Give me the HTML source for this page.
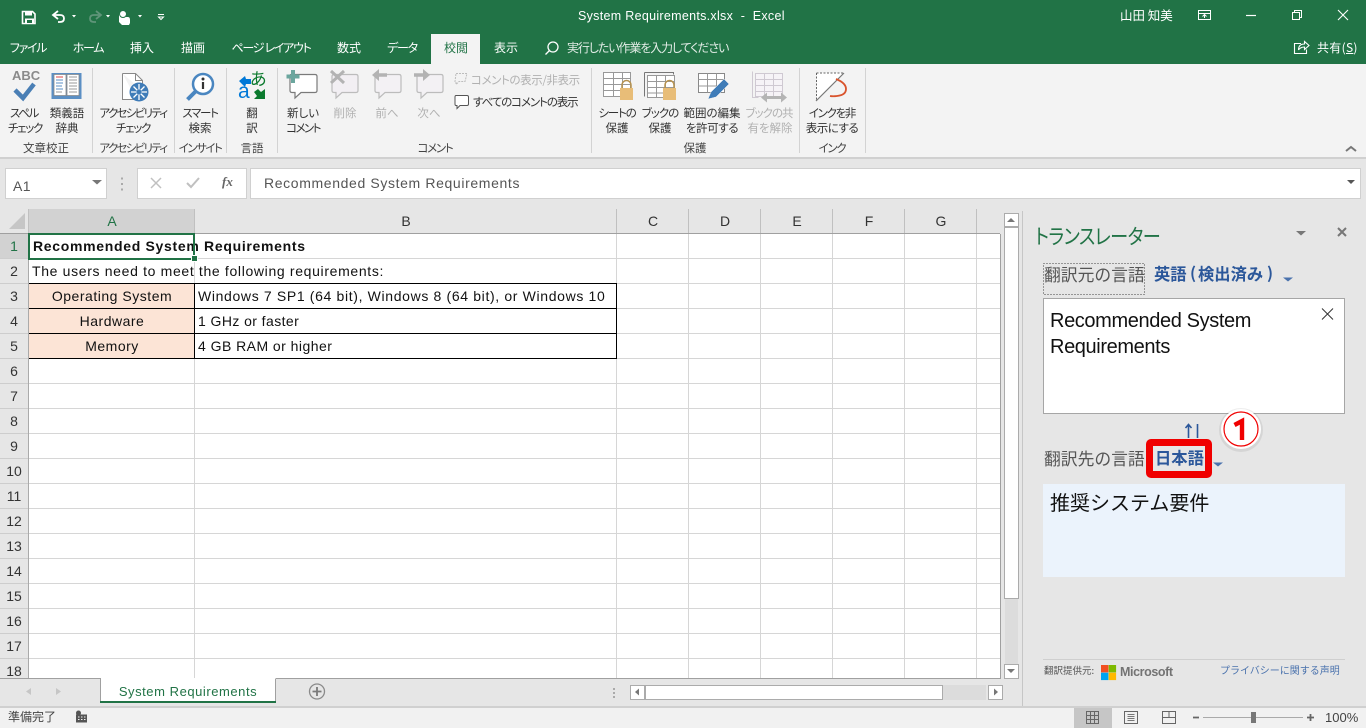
<!DOCTYPE html>
<html lang="ja"><head><meta charset="utf-8"><title>System Requirements.xlsx - Excel</title>
<style>
*{box-sizing:border-box}
html,body{margin:0;padding:0;width:1366px;height:728px;overflow:hidden;background:#e6e6e6}
body{position:relative;font-family:"Liberation Sans","Noto Sans CJK JP",sans-serif;color:#262626}
.r{position:absolute}
.t{position:absolute;white-space:nowrap;line-height:1;font-family:"Noto Sans CJK JP","Liberation Sans",sans-serif;font-feature-settings:"palt"}
.c{transform:translateX(-50%);text-align:center}
.w{color:#fff}
.tab{font-size:12px;top:42px;color:#fff}
.l{font-size:11.5px;color:#333}
.g{font-size:11.5px;color:#444;top:143px}
.d{color:#b1b1b1}
.k{letter-spacing:-1.3px}
.cell{position:absolute;white-space:nowrap;line-height:1;font-family:"Liberation Sans","Noto Sans CJK JP",sans-serif;font-size:14px;color:#111;letter-spacing:.5px}
.rh{position:absolute;left:0;width:28px;text-align:center;font:14px/1 "Liberation Sans",sans-serif;color:#333}
.ch{position:absolute;top:214px;font:14px/1 "Liberation Sans",sans-serif;color:#333;transform:translateX(-50%)}
svg{position:absolute;left:0;top:0}
</style></head><body>
<div class="r" style="left:0;top:0;width:1366px;height:64px;background:#217346"></div>
<div class="r" style="left:431px;top:34px;width:49px;height:30px;background:#f3f3f3"></div>
<div class="r" style="left:0;top:64px;width:1366px;height:93px;background:#f3f3f3"></div>
<div class="r" style="left:0;top:157px;width:1366px;height:2px;background:#d0d0d0"></div>
<div class="r" style="left:5px;top:168px;width:102px;height:31px;background:#fff;border:1px solid #d0d0d0"></div>
<div class="r" style="left:137px;top:168px;width:110px;height:31px;background:#fff;border:1px solid #d0d0d0"></div>
<div class="r" style="left:250px;top:168px;width:1111px;height:31px;background:#fff;border:1px solid #d0d0d0"></div>
<div class="r" style="left:29px;top:234px;width:971px;height:444px;background:#fff"></div>
<div class="r" style="left:29px;top:284px;width:166px;height:74px;background:#fce4d6"></div>
<div class="r" style="left:29px;top:209px;width:166px;height:24px;background:#d2d2d2"></div>
<div class="r" style="left:0;top:234px;width:28px;height:25px;background:#d2d2d2"></div>
<div class="r" style="left:100px;top:678px;width:176px;height:25px;background:#fff"></div>
<div class="r" style="left:0;top:706px;width:1366px;height:22px;background:#f1f1f1;border-top:2px solid #d0d0d0"></div>
<div class="r" style="left:1074px;top:708px;width:38px;height:20px;background:#c6c6c6"></div>
<div class="r" style="left:1043px;top:298px;width:302px;height:116px;background:#fff;border:1px solid #a6a6a6"></div>
<div class="r" style="left:1043px;top:484px;width:302px;height:93px;background:#ebf3fc"></div>
<div class="r" style="left:1146px;top:439px;width:66px;height:39px;border:7px solid #f00000;border-radius:5px"></div>

<svg width="1366" height="728" viewBox="0 0 1366 728" fill="none">
<!-- Quick access -->
<g stroke="#fff" stroke-width="1.6"><path d="M22.500 11.500h10l2.500 2.500v9.500h-12.500z"/></g>
<path d="M25 11.500h7v4h-7zM25 18.500h9v5h-9z" fill="#fff"/><path d="M27 20h5v3h-5z" fill="#217346"/>
<path d="M58 11l-5 4 5 4" stroke="#fff" stroke-width="1.800"/><path d="M54 15h6q4 0 4 3.500t-4 3.500h-2" stroke="#fff" stroke-width="1.800"/>
<path d="M72 15h4l-2 2.500zM106 15h4l-2 2.500zM138 15h4l-2 2.500z" fill="#fff"/>
<path d="M96 11l5 4-5 4" stroke="#5f9579" stroke-width="1.800"/><path d="M100 15h-6q-4 0-4 3.500t4 3.500h2" stroke="#5f9579" stroke-width="1.800"/>
<path d="M119 22v-7q0-2 1.500-3t3.500 0 2 3v2h2q2 0 2 3v3l-1 2h-7z" fill="#fff"/><circle cx="123" cy="14" r="3.500" stroke="#217346" fill="#fff"/>
<path d="M158 14.500h6M158.500 17h5l-2.500 2.500z" stroke="#fff"/>
<!-- window -->
<g stroke="#fff" stroke-width="1"><rect x="1198.500" y="10.500" width="12" height="9"/><path d="M1198 13.500h13M1204.500 18v-3.500M1202.500 16.500l2-2 2 2"/><path d="M1246 15.500h10" stroke-width="1.200"/><rect x="1292.500" y="12.500" width="7" height="7"/><path d="M1294.500 12.500v-2h7v7h-2"/><path d="M1338 10l10 10M1348 10l-10 10" stroke-width="1.100"/></g>
<circle cx="553" cy="47" r="5" stroke="#fff" stroke-width="1.300"/><path d="M549.500 50.500l-4 4" stroke="#fff" stroke-width="1.300"/>
<g stroke="#fff" stroke-width="1.100"><path d="M1301 43.500h-6.500v10h12v-4M1298.500 50q0-6 6-6v-2.500l4.500 4-4.500 4v-2.500q-4 0-6 3"/></g>
<!-- ribbon seps -->
<path d="M92.500 68v85M174.500 68v85M226.500 68v85M277.500 68v85M591.500 68v85M799.500 68v85M865.500 68v85" stroke="#d3d3d3"/>
<path d="M1346 151l5-4 5 4" stroke="#777" stroke-width="2"/>
<!-- spell -->
<path d="M15 90l8 8 11-14" stroke="#4a7fb5" stroke-width="4.500"/>
<!-- book -->
<rect x="51.500" y="73" width="30" height="26" fill="#5b8fc4"/><path d="M54 74.500h12v21h-12zM67 74.500h12v21h-12z" fill="#fff" stroke="#8a8a8a" stroke-width=".8"/>
<path d="M56 77h7" stroke="#d44"/><path d="M56 80h7M56 83h7M56 86h6M56 89h7" stroke="#5b8fc4"/><path d="M69 77h8M69 80h8M69 83h8M69 86h8M69 89h8M69 92h8" stroke="#999"/><path d="M56 92h6" stroke="#999"/>
<!-- accessibility -->
<path d="M122.500 73.500h13l7 7v10M122.500 73.500v26h14" stroke="#888" fill="#fff"/><path d="M135.500 73.500v7h7" stroke="#888"/>
<circle cx="139" cy="92" r="9.500" fill="#3f7cb8"/><path d="M139 84v16M131 92h16M133.500 86.500l11 11M144.500 86.500l-11 11" stroke="#fff" stroke-width="1.300"/><circle cx="139" cy="92" r="2.500" fill="#3f7cb8"/>
<!-- smart -->
<circle cx="203" cy="84" r="10" fill="#fff" stroke="#4a86c0" stroke-width="2.500"/><path d="M195.500 91.500l-8 8" stroke="#4a86c0" stroke-width="4"/><circle cx="203" cy="79" r="1.500" fill="#333"/><path d="M203 82v7" stroke="#333" stroke-width="2.200"/>
<!-- translate -->
<path d="M239 81l6-5 1 3h5v5h-5l-1 3z" fill="#0078d7"/>
<path d="M265 99h-11l3-3-3-4 4-3 3 3 4-3z" fill="#0c7a2e"/>
<!-- comments -->
<path d="M291 74.500h24q2 0 2 2v14q0 2-2 2h-14l-6 5.500v-5.500h-3q-2 0-2-2v-14q0-2 1-2z" stroke="#7a7a7a" stroke-width="1.200" fill="#fff"/>
<path d="M293 70v13M286.500 76.500h13" stroke="#6ba69e" stroke-width="4"/>
<path d="M334 74.500h22q2 0 2 2v14q0 2-2 2h-14l-6 5.500v-5.500h-2q-2 0-2-2v-14q0-2 2-2z" stroke="#bcbcbc" stroke-width="1.200" fill="#f2eff3"/>
<path d="M331 71l13 12M344 71l-13 12" stroke="#b3b3b3" stroke-width="3"/>
<path d="M375 74.500h24q2 0 2 2v14q0 2-2 2h-14l-6 5.500v-5.500h-2q-2 0-2-2v-14q0-2 2-2z" stroke="#bcbcbc" stroke-width="1.200" fill="#f3f1f4"/>
<path d="M376 75h11" stroke="#b3b3b3" stroke-width="3.500"/><path d="M379 69l-7 6 7 6z" fill="#b3b3b3"/>
<path d="M417 74.500h24q2 0 2 2v14q0 2-2 2h-14l-6 5.500v-5.500h-2q-2 0-2-2v-14q0-2 2-2z" stroke="#bcbcbc" stroke-width="1.200" fill="#f3f1f4"/>
<path d="M414 75h11" stroke="#b3b3b3" stroke-width="3.500"/><path d="M423 69l7 6-7 6z" fill="#b3b3b3"/>
<path d="M456 73.500h11l-2 8h-6l-3 3v-3h-1z" stroke="#bdbdbd" stroke-dasharray="2 1"/>
<path d="M456 95.500h11q1.500 0 1.500 1.500v7q0 1.500-1.500 1.500h-7l-3 3v-3h-1q-1 0-1-1.500v-7q0-1.500 1-1.500z" stroke="#555" fill="#fff"/>
<!-- protect -->
<path d="M603.500 72.500h27v24h-27z" stroke="#999" fill="#fff"/><path d="M603.500 78.500h27M603.500 84.500h27M603.500 90.500h27M613.500 72.500v24M622.500 72.500v24" stroke="#999"/>
<rect x="620" y="88" width="13" height="12" fill="#e8bd78"/><path d="M622 88v-3a4.500 4.500 0 0 1 9 0v3" stroke="#b6924f" stroke-width="1.500"/>
<path d="M644.500 72.500h29v2M644.500 72.500v24" stroke="#777"/><path d="M647.500 75.500h27v22h-27z" stroke="#999" fill="#fff"/><path d="M647.500 81.500h27M647.500 87.500h27M647.500 93h27M656.500 75.500v22M665.500 75.500v22" stroke="#999"/>
<rect x="663" y="88" width="13" height="12" fill="#e8bd78"/><path d="M665 88v-3a4.500 4.500 0 0 1 9 0v3" stroke="#b6924f" stroke-width="1.500"/>
<path d="M698.500 73.500h26v19h-26z" stroke="#888" fill="#fff"/><path d="M698.500 79.500h26M698.500 86h26M707.500 73.500v19M716.500 73.500v19" stroke="#999"/>
<path d="M708 99l3-7 13-13 5 5-13 13z" fill="#3f7cb8" stroke="#f3f3f3" stroke-width=".5"/>
<path d="M755.500 73.500h27v23h-27z" stroke="#cfc9d2" fill="#f6f3f7"/><path d="M755.500 79.500h27M755.500 85.500h27M755.500 91.500h27M764.500 73.500v23M773.500 73.500v23M752.500 71.500v26h6" stroke="#cfc9d2"/>
<path d="M764 97.500h20" stroke="#b4b4b4" stroke-width="3"/><path d="M767 92.500l-6 5 6 5zM781 92.500l6 5-6 5z" fill="#b4b4b4"/>
<!-- ink -->
<path d="M816.500 73h27.500l-27 27.500z" fill="#fff"/><path d="M816.500 73h27M816.500 73v27" stroke="#666" stroke-dasharray="2 1.500"/><path d="M844 73l-28 28" stroke="#777" stroke-width="1.200"/>
<path d="M836 79q10 4 10 10t-9 7q-4 .5-7 0" stroke="#d9532c" stroke-width="1.800"/>
<!-- name box -->
<path d="M92 180h10l-5 4.500z" fill="#777"/><path d="M122 177.500v2M122 183v2M122 188.500v2" stroke="#aaa" stroke-width="2"/>
<path d="M151 178l10 10M161 178l-10 10" stroke="#c0c0c0" stroke-width="1.500"/><path d="M187 183l4 4 8-9" stroke="#c0c0c0" stroke-width="2"/>
<path d="M1347 180h8l-4 4z" fill="#555"/>
<!-- corner -->
<path d="M25 213v16h-16z" fill="#c6c6c6"/>
<!-- headers -->
<path d="M28.500 209v25M194.500 209v25M616.500 209v25M688.500 209v25M760.500 209v25M832.500 209v25M904.500 209v25M976.500 209v25" stroke="#c0c0c0"/>
<path d="M0 233.500h1000" stroke="#a0a0a0"/>
<path d="M28.500 233v445" stroke="#aaa"/>
<path d="M0 258.500h28M0 283.500h28M0 308.500h28M0 333.500h28M0 358.500h28M0 383.500h28M0 408.500h28M0 433.500h28M0 458.500h28M0 483.500h28M0 508.500h28M0 533.500h28M0 558.500h28M0 583.500h28M0 608.500h28M0 633.500h28M0 658.500h28" stroke="#cdcdcd"/>
<!-- grid -->
<path d="M29 258.500h971M29 283.500h971M29 308.500h971M29 333.500h971M29 358.500h971M29 383.500h971M29 408.500h971M29 433.500h971M29 458.500h971M29 483.500h971M29 508.500h971M29 533.500h971M29 558.500h971M29 583.500h971M29 608.500h971M29 633.500h971M29 658.500h971" stroke="#d6d6d6"/>
<path d="M194.500 259v419M616.500 234v444M688.500 234v444M760.500 234v444M832.500 234v444M904.500 234v444M976.500 234v444" stroke="#d6d6d6"/>
<path d="M1000.500 234v445" stroke="#a0a0a0"/>
<path d="M29 283.500h588M29 308.500h588M29 333.500h588M29 358.500h588M194.500 283v76M616.500 283v76" stroke="#000"/>
<!-- vscroll -->
<rect x="1004.500" y="213.500" width="14" height="13" fill="#fff" stroke="#ababab"/><path d="M1007 222h8l-4-4z" fill="#777"/>
<rect x="1004.500" y="227.500" width="14" height="371" fill="#fff" stroke="#ababab"/>
<rect x="1005" y="599" width="13" height="65" fill="#dcdcdc"/>
<rect x="1004.500" y="664.500" width="14" height="14" fill="#fff" stroke="#ababab"/><path d="M1007 669h8l-4 4z" fill="#777"/>
<path d="M1022.500 211v495" stroke="#c6c6c6"/>
<!-- tabs -->
<path d="M0 678.500h100.500v24M275.500 678.500v24M276 678.500h724" stroke="#a0a0a0"/>
<path d="M100 702h176" stroke="#217346" stroke-width="2"/>
<path d="M31 688l-5 3.500 5 3.500zM56 688l5 3.500-5 3.500z" fill="#c6c6c6"/>
<circle cx="317" cy="691.500" r="7.500" stroke="#8a8a8a" stroke-width="1.300"/><path d="M317 687v9M312.500 691.500h9" stroke="#7a7a7a" stroke-width="1.800"/>
<path d="M614 688v2M614 692v2M614 696v2" stroke="#aaa" stroke-width="2"/>
<rect x="630.500" y="685.500" width="14" height="14" fill="#fff" stroke="#ababab"/><path d="M639 688.500v7l-4-3.500z" fill="#777"/>
<rect x="645.500" y="685.500" width="297" height="14" fill="#fff" stroke="#ababab"/>
<rect x="943" y="685" width="43" height="15" fill="#dcdcdc"/>
<rect x="988.500" y="685.500" width="14" height="14" fill="#fff" stroke="#ababab"/><path d="M994 688.500v7l4-3.500z" fill="#777"/>
<!-- status -->
<circle cx="78.500" cy="713" r="2.500" fill="#555"/><path d="M76 714.500h11v8h-11z" fill="#555"/><path d="M78 717h1.500M81 717h1.500M84 717h1.500M78 719.500h1.500M81 719.500h1.500M84 719.500h1.500" stroke="#f1f1f1"/>
<path d="M1086.500 711.500h12v12h-12zM1086.500 715.500h12M1086.500 719.500h12M1090.500 711.500v12M1094.500 711.500v12" stroke="#666"/>
<path d="M1124.500 711.500h13v12h-13z" stroke="#666"/><path d="M1127.500 714.500h7M1127.500 716.500h7M1127.500 718.500h7M1127.500 720.500h7" stroke="#777"/>
<path d="M1162.500 711.500h13v12h-13zM1169 711.500v6M1162.500 717.500h13" stroke="#666"/>
<path d="M1193 717.500h6M1307 717.500h7M1310.500 714v7" stroke="#666" stroke-width="1.800"/><path d="M1203 717.500h100" stroke="#aaa"/><rect x="1251" y="712" width="5" height="11" fill="#777"/>
<!-- panel -->
<path d="M1296 231h10l-5 4.500z" fill="#777"/>
<path d="M1338 228l8 8M1346 228l-8 8" stroke="#777" stroke-width="2"/>
<rect x="1043.500" y="263.500" width="101" height="31" stroke="#444" stroke-dasharray="1 2"/>
<path d="M1283 277.500h10l-5 4z" fill="#4a72ad"/>
<path d="M1322 308.500l11 11M1333 308.500l-11 11" stroke="#333"/>
<path d="M1188.500 438v-13M1185.500 428l3-3.500 3 3.500" stroke="#2b579a" stroke-width="1.600"/><path d="M1197.500 424v14" stroke="#2b579a" stroke-width="1.600"/>
<path d="M1213 462.500h10l-5 4z" fill="#4a72ad"/>
<path d="M1043 659.500h302" stroke="#cfcfcf"/>
<rect x="1101" y="665" width="7.400" height="7.400" fill="#f25022"/><rect x="1108.700" y="665" width="7.400" height="7.400" fill="#7fba00"/><rect x="1101" y="672.700" width="7.400" height="7.400" fill="#00a4ef"/><rect x="1108.700" y="672.700" width="7.400" height="7.400" fill="#ffb900"/>
<!-- annotation -->
<circle cx="1241" cy="430" r="22" fill="#000" opacity=".07"/>
<circle cx="1241" cy="429" r="20" fill="#fff"/>
<circle cx="1241" cy="429" r="17" stroke="#f00000" stroke-width="1.200"/>
<path d="M1234.500 425l7.500-4v19" stroke="#f00000" stroke-width="4.400"/>
</svg>

<!-- title -->
<div class="t w" style="left:578px;top:10px;font:12.500px/1 'Liberation Sans',sans-serif;letter-spacing:.3px">System Requirements.xlsx&nbsp; -&nbsp; Excel</div>
<div class="t w" style="left:1120px;top:9px;font-size:12.500px">山田 知美</div>
<div class="t tab c k" style="left:28px">ファイル</div>
<div class="t tab c k" style="left:88px">ホーム</div>
<div class="t tab c" style="left:142px">挿入</div>
<div class="t tab c" style="left:193px">描画</div>
<div class="t tab c k" style="left:271px">ページ レイアウト</div>
<div class="t tab c" style="left:349px">数式</div>
<div class="t tab c k" style="left:402px">データ</div>
<div class="t tab c" style="left:456px;color:#217346">校閲</div>
<div class="t tab c" style="left:506px">表示</div>
<div class="t tab" style="left:567px;color:#e2ece6;letter-spacing:-1.1px">実行したい作業を入力してください</div>
<div class="t tab" style="left:1317px;letter-spacing:.3px">共有(<u>S</u>)</div>

<!-- ribbon labels -->
<div class="t" style="left:12px;top:69px;font:bold 13px/1 'Liberation Sans',sans-serif;color:#8a8a8a">ABC</div>
<div class="t l c k" style="left:24px;top:108px">スペル</div><div class="t l c k" style="left:25px;top:123px">チェック</div>
<div class="t l c" style="left:67px;top:108px">類義語</div><div class="t l c" style="left:67px;top:123px">辞典</div>
<div class="t l c k" style="left:133px;top:108px;letter-spacing:-1.7px">アクセシビリティ</div><div class="t l c k" style="left:133px;top:123px">チェック</div>
<div class="t l c k" style="left:200px;top:108px">スマート</div><div class="t l c" style="left:200px;top:123px">検索</div>
<div class="t l c" style="left:252px;top:108px">翻</div><div class="t l c" style="left:252px;top:123px">訳</div>
<div class="t" style="left:250px;top:69px;font-size:17px;color:#0c7a2e">あ</div>
<div class="t" style="left:238px;top:81px;font:21px/1 'Liberation Sans',sans-serif;color:#0078d7">a</div>
<div class="t l c" style="left:303px;top:108px">新しい</div><div class="t l c k" style="left:303px;top:123px;letter-spacing:-1.6px">コメント</div>
<div class="t l c d" style="left:345px;top:108px">削除</div>
<div class="t l c d" style="left:387px;top:108px">前へ</div>
<div class="t l c d" style="left:429px;top:108px">次へ</div>
<div class="t l d" style="left:471px;top:75px;letter-spacing:-.4px">コメントの表示/非表示</div>
<div class="t l" style="left:473px;top:97px;letter-spacing:-1.1px">すべてのコメントの表示</div>
<div class="t l c" style="left:617px;top:108px;letter-spacing:-1.2px">シートの</div><div class="t l c" style="left:617px;top:123px">保護</div>
<div class="t l c" style="left:660px;top:108px;letter-spacing:-1px">ブックの</div><div class="t l c" style="left:660px;top:123px">保護</div>
<div class="t l c" style="left:712px;top:108px">範囲の編集</div><div class="t l c" style="left:712px;top:123px;letter-spacing:-.4px">を許可する</div>
<div class="t l c d" style="left:769px;top:108px;letter-spacing:-1px">ブックの共</div><div class="t l c d" style="left:770px;top:123px">有を解除</div>
<div class="t l c" style="left:832px;top:108px;letter-spacing:-1.3px">インクを非</div><div class="t l c" style="left:832px;top:123px;letter-spacing:-.5px">表示にする</div>
<div class="t g c" style="left:46px">文章校正</div>
<div class="t g c k" style="left:133px;letter-spacing:-1.7px">アクセシビリティ</div>
<div class="t g c k" style="left:200px;letter-spacing:-1.5px">インサイト</div>
<div class="t g c" style="left:252px">言語</div>
<div class="t g c k" style="left:435px">コメント</div>
<div class="t g c" style="left:695px">保護</div>
<div class="t g c k" style="left:832px">インク</div>

<!-- formula bar -->
<div class="t" style="left:13px;top:179px;font:14px/1 'Liberation Sans',sans-serif;color:#555;letter-spacing:.4px">A1</div>
<div class="t" style="left:222px;top:175px;font:italic bold 13px/1 'Liberation Serif',serif;color:#666">fx</div>
<div class="t" style="left:264px;top:176px;font:14px/1 'Liberation Sans',sans-serif;color:#555;letter-spacing:.63px">Recommended System Requirements</div>

<!-- headers -->
<div class="ch" style="left:112px;color:#217346">A</div><div class="ch" style="left:406px">B</div><div class="ch" style="left:653px">C</div><div class="ch" style="left:725px">D</div><div class="ch" style="left:797px">E</div><div class="ch" style="left:869px">F</div><div class="ch" style="left:941px">G</div>
<div class="rh" style="top:239px;color:#217346">1</div><div class="rh" style="top:264px">2</div><div class="rh" style="top:289px">3</div><div class="rh" style="top:314px">4</div><div class="rh" style="top:339px">5</div><div class="rh" style="top:364px">6</div><div class="rh" style="top:389px">7</div><div class="rh" style="top:414px">8</div><div class="rh" style="top:439px">9</div><div class="rh" style="top:464px">10</div><div class="rh" style="top:489px">11</div><div class="rh" style="top:514px">12</div><div class="rh" style="top:539px">13</div><div class="rh" style="top:564px">14</div><div class="rh" style="top:589px">15</div><div class="rh" style="top:614px">16</div><div class="rh" style="top:639px">17</div><div class="rh" style="top:664px">18</div>

<!-- cells -->
<div class="cell" style="left:33px;top:239px;font-weight:bold;letter-spacing:.69px">Recommended System Requirements</div>
<div class="cell" style="left:32px;top:264px;letter-spacing:.66px">The users need to meet the following requirements:</div>
<div class="cell c" style="left:112px;top:289px;letter-spacing:.52px">Operating System</div>
<div class="cell c" style="left:112px;top:314px">Hardware</div>
<div class="cell c" style="left:112px;top:339px">Memory</div>
<div class="cell" style="left:198px;top:289px;letter-spacing:.65px">Windows 7 SP1 (64 bit), Windows 8 (64 bit), or Windows 10</div>
<div class="cell" style="left:198px;top:314px;letter-spacing:.42px">1 GHz or faster</div>
<div class="cell" style="left:198px;top:339px;letter-spacing:.46px">4 GB RAM or higher</div>
<div class="r" style="left:28px;top:233px;width:167px;height:27px;border:2px solid #217346"></div>
<div class="r" style="left:192px;top:256px;width:5px;height:5px;background:#217346;outline:1px solid #fff"></div>

<!-- sheet tab / status -->
<div class="t c" style="left:188px;top:685px;font:13px/1 'Liberation Sans',sans-serif;color:#217346;letter-spacing:.55px">System Requirements</div>
<div class="t" style="left:8px;top:711px;font-size:12px;color:#444">準備完了</div>
<div class="t" style="left:1325px;top:711px;font:13px/1 'Liberation Sans',sans-serif;color:#444">100%</div>

<!-- panel text -->
<div class="t" style="left:1035px;top:226px;font-size:21px;color:#217346;letter-spacing:-.6px;transform:scaleX(.865);transform-origin:0 0">トランスレーター</div>
<div class="t" style="left:1044px;top:266px;font-size:16.800px;color:#555;font-feature-settings:normal">翻訳元の言語</div>
<div class="t" style="left:1154px;top:265px;font-size:16.300px;font-weight:bold;color:#2b579a;font-feature-settings:normal">英語</div>
<div class="t" style="left:1190px;top:264px;font-size:16px;font-weight:bold;color:#2b579a">(</div>
<div class="t" style="left:1198px;top:265px;font-size:16.300px;font-weight:bold;color:#2b579a;font-feature-settings:normal">検出済み</div>
<div class="t" style="left:1267px;top:264px;font-size:16px;font-weight:bold;color:#2b579a">)</div>
<div class="t" style="left:1050px;top:311px;font:20px/1 'Liberation Sans',sans-serif;color:#111;letter-spacing:-.38px">Recommended System</div>
<div class="t" style="left:1050px;top:337px;font:20px/1 'Liberation Sans',sans-serif;color:#111;letter-spacing:-.38px">Requirements</div>
<div class="t" style="left:1044px;top:450px;font-size:16.800px;color:#555;font-feature-settings:normal">翻訳先の言語</div>
<div class="t" style="left:1155px;top:449px;font-size:16.300px;font-weight:bold;color:#2b579a;font-feature-settings:normal">日本語</div>
<div class="t" style="left:1050px;top:492px;font-size:20px;color:#111;font-feature-settings:normal">推奨システム要件</div>
<div class="t" style="left:1044px;top:666px;font-size:9.500px;color:#555;font-feature-settings:normal">翻訳提供元:</div>
<div class="t" style="left:1120px;top:666px;font:bold 12.500px/1 'Liberation Sans',sans-serif;color:#737373;letter-spacing:-.4px">Microsoft</div>
<div class="t" style="left:1220px;top:665px;font-size:10px;color:#4a72ad;font-feature-settings:normal">プライバシーに関する声明</div>
</body></html>
